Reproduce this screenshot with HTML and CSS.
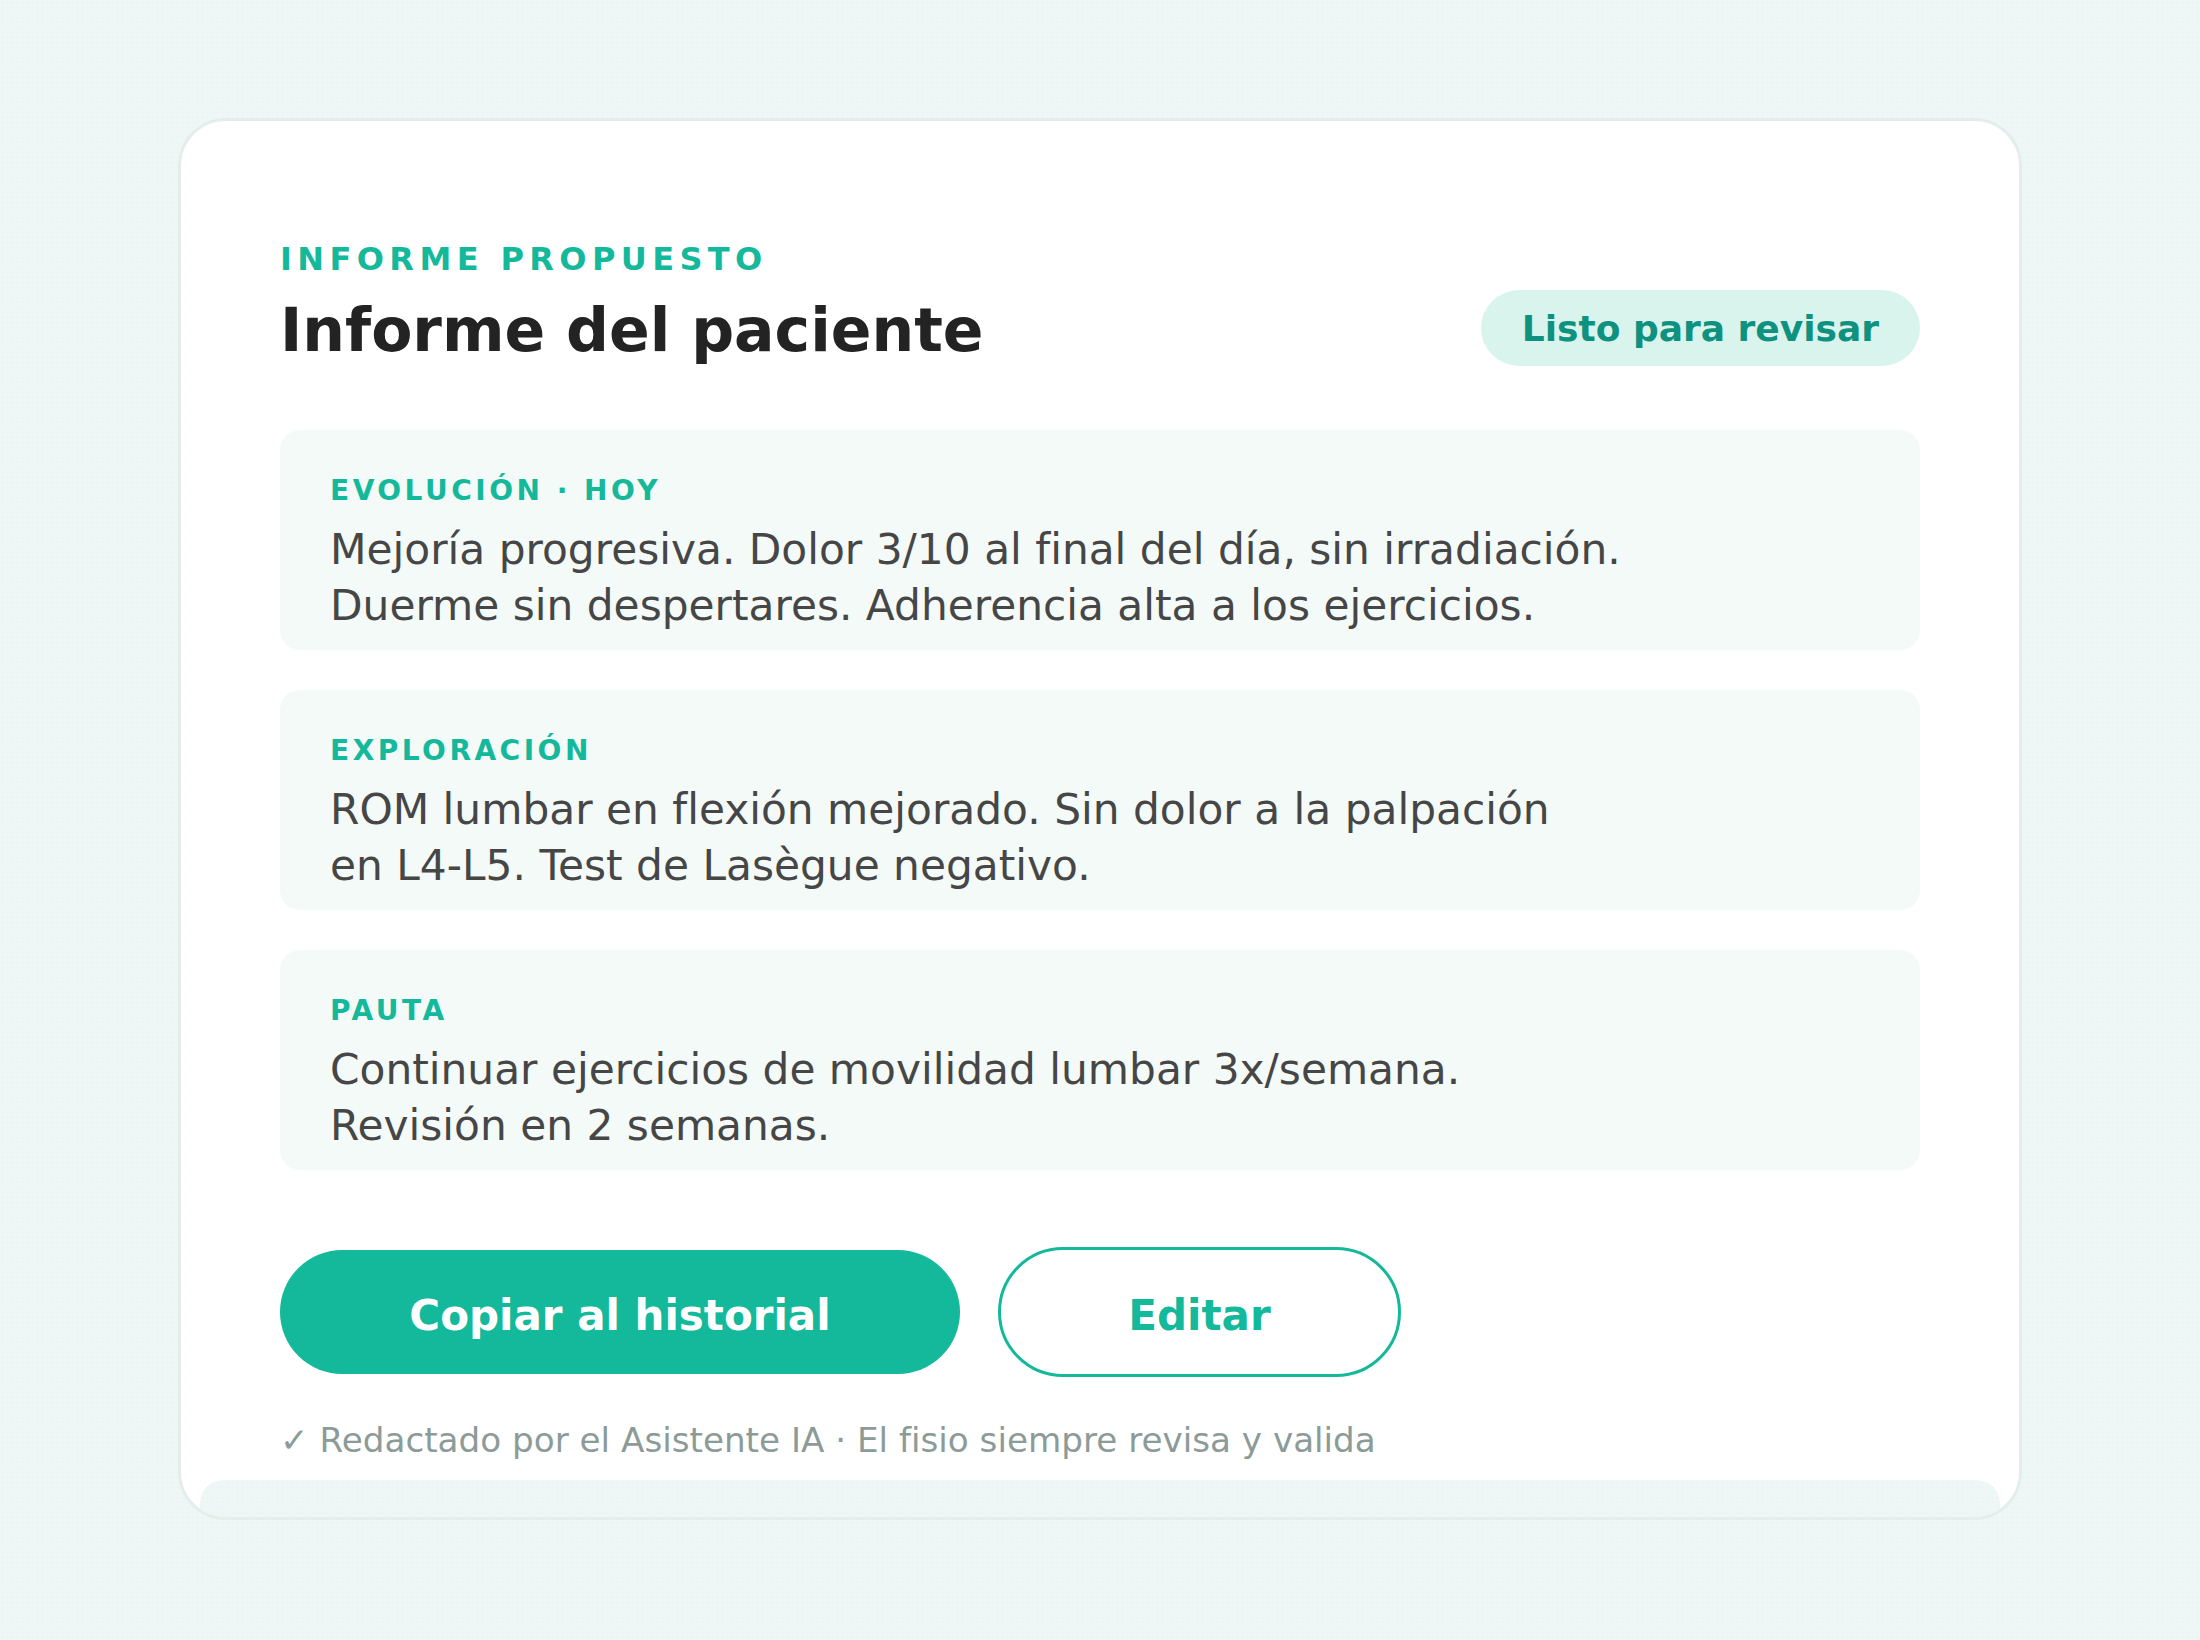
FILE: index.html
```html
<!DOCTYPE html>
<html lang="es">
<head>
    <meta charset="UTF-8">
    <meta name="viewport" content="width=device-width, initial-scale=1.0">
    <title>Informe del paciente</title>
    <link rel="stylesheet" href="styles.css">
</head>
<body>
    <main class="page">
        <section class="report-card">
            <p class="eyebrow">INFORME PROPUESTO</p>
            <div class="report-head">
                <h1>Informe del paciente</h1>
                <span class="status">Listo para revisar</span>
            </div>

            <div class="blocks">
                <div class="block">
                    <h2 class="block-title">EVOLUCIÓN · HOY</h2>
                    <p>Mejoría progresiva. Dolor 3/10 al final del día, sin irradiación.<br>Duerme sin despertares. Adherencia alta a los ejercicios.</p>
                </div>
                <div class="block">
                    <h2 class="block-title">EXPLORACIÓN</h2>
                    <p>ROM lumbar en flexión mejorado. Sin dolor a la palpación<br>en L4-L5. Test de Lasègue negativo.</p>
                </div>
                <div class="block">
                    <h2 class="block-title">PAUTA</h2>
                    <p>Continuar ejercicios de movilidad lumbar 3x/semana.<br>Revisión en 2 semanas.</p>
                </div>
            </div>

            <div class="actions">
                <button class="btn btn-primary">Copiar al historial</button>
                <button class="btn btn-outline">Editar</button>
            </div>

            <p class="note">✓ Redactado por el Asistente IA · El fisio siempre revisa y valida</p>

            <!-- next report card peeking from below -->
            <div class="next-peek"></div>
        </section>
    </main>
</body>
</html>
```

FILE: styles.css
```css
body {
    margin: 0;
    font-family: "DejaVu Sans", "Noto Sans", sans-serif;
    background-color: #eef7f5;
    background-image: radial-gradient(circle, #e7f1ee 0.8px, transparent 1.1px);
    background-size: 5px 5px;
}
.page {
    padding: 118px 178px;
}
.report-card {
    box-sizing: border-box;
    height: 1402px;
    background: #fff;
    border: 3px solid #e3eeeb;
    border-radius: 48px;
    padding: 119px 99px 0;
    overflow: hidden;
    display: flex;
    flex-direction: column;
}
.eyebrow {
    margin: 0;
    font-size: 32px;
    line-height: 38px;
    font-weight: bold;
    letter-spacing: 5.4px;
    color: #14b89a;
}
.report-head {
    display: flex;
    justify-content: space-between;
    align-items: flex-end;
    margin-top: 12px;
}
.report-head h1 {
    margin: 0;
    font-size: 60px;
    line-height: 72px;
    color: #232323;
}
.status {
    height: 76px;
    line-height: 78px;
    padding: 0 41px;
    border-radius: 38px;
    background: #d9f4ec;
    color: #0f917f;
    font-size: 36px;
    font-weight: bold;
}
.blocks {
    margin-top: 64px;
    display: flex;
    flex-direction: column;
    gap: 40px;
}
.block {
    box-sizing: border-box;
    height: 220px;
    padding: 44px 50px 0;
    background: #f3faf8;
    border-radius: 20px;
}
.block-title {
    margin: 0;
    font-size: 28px;
    line-height: 34px;
    font-weight: bold;
    letter-spacing: 3.5px;
    color: #14b89a;
}
.block p {
    margin: 14px 0 0;
    font-size: 42.3px;
    line-height: 56px;
    color: #464646;
}
.actions {
    display: flex;
    align-items: center;
    gap: 38px;
    margin-top: 77px;
}
.btn {
    font-family: inherit;
    font-size: 42px;
    font-weight: bold;
    border-radius: 999px;
    padding: 6px 0 0;
    cursor: pointer;
}
.btn-primary {
    width: 680px;
    height: 124px;
    border: none;
    background: #14b89a;
    color: #fff;
}
.btn-outline {
    width: 403px;
    height: 130px;
    border: 3px solid #14b89a;
    background: #fff;
    color: #14b89a;
}
.note {
    margin: 43px 0 0;
    font-size: 34.2px;
    line-height: 40px;
    color: #8c9b98;
}
.next-peek {
    flex-shrink: 0;
    height: 60px;
    margin: 20px -80px 0;
    border-radius: 24px;
    background-color: #eef7f5;
    background-image: radial-gradient(circle, #e7f1ee 0.8px, transparent 1.1px);
    background-size: 5px 5px;
}
```
